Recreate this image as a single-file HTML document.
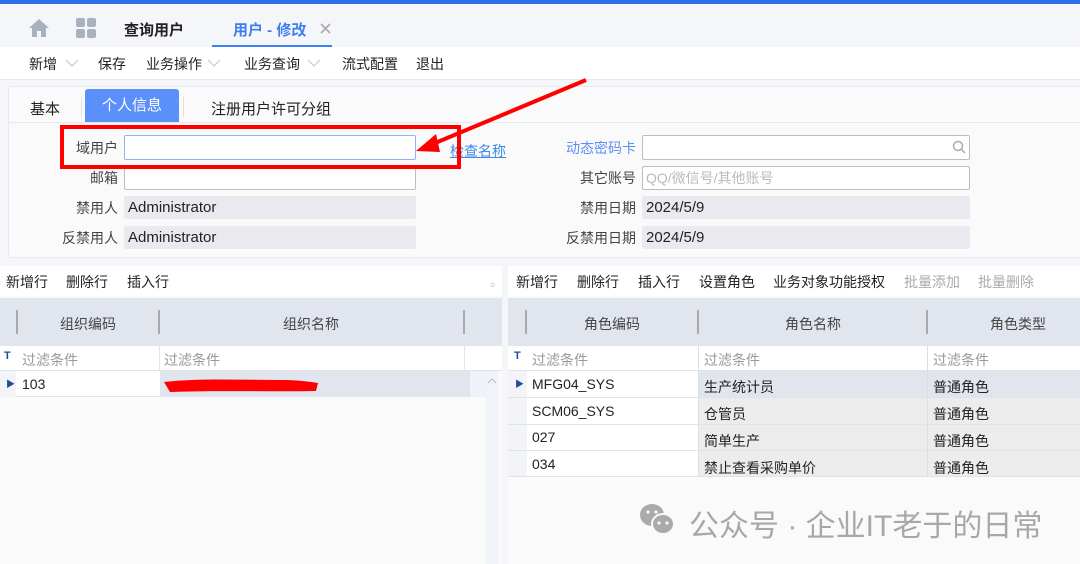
<!DOCTYPE html>
<html><head><meta charset="utf-8"><style>
*{margin:0;padding:0;box-sizing:border-box}
body{width:1080px;height:564px;overflow:hidden;background:#f5f6fa;font-family:"Liberation Sans","Noto Sans CJK SC",sans-serif;font-size:14px;color:#222;position:relative}
.a{position:absolute;white-space:nowrap}
.lbl{position:absolute;text-align:right;color:#444;font-size:14px}
.inp{position:absolute;background:#fff;border:1px solid #b8bdcc;border-radius:2px}
.ro{position:absolute;background:#e8eaef;border-radius:2px;font-size:15px;padding-left:4px;line-height:24px;color:#222}
.g{position:absolute;color:#999;font-size:14px}
</style></head><body>
<div class="a" style="left:0;top:0;width:1080px;height:4px;background:#2f6fe6"></div>
<svg class="a" style="left:28px;top:18px" width="22" height="20" viewBox="0 0 22 20"><path d="M11 1 L1 10 H4 V19 H9 V13 H13 V19 H18 V10 H21 Z" fill="#a9b0c0"/></svg>
<svg class="a" style="left:76px;top:18px" width="20" height="20"><rect x="0" y="0" width="9" height="9" rx="2" fill="#a9b0c0"/><rect x="11" y="0" width="9" height="9" rx="2" fill="#a9b0c0"/><rect x="0" y="11" width="9" height="9" rx="2" fill="#a9b0c0"/><rect x="11" y="11" width="9" height="9" rx="2" fill="#a9b0c0"/></svg>
<div class="a" style="left:124px;top:19px;font-size:15px;font-weight:bold;color:#222">查询用户</div>
<div class="a" style="left:233px;top:19px;font-size:15px;font-weight:bold;color:#3d7ff0">用户 - 修改</div>
<svg class="a" style="left:320px;top:23px" width="11" height="11"><path d="M1 1L10 10M10 1L1 10" stroke="#aaa" stroke-width="1.6"/></svg>
<div class="a" style="left:212px;top:45px;width:120px;height:2px;background:#3d7ff0"></div>
<div class="a" style="left:0;top:47px;width:1080px;height:33px;background:#fff;border-bottom:1px solid #e6e8ee"></div>
<div class="a" style="left:29px;top:54px">新增</div>
<div class="a" style="left:98px;top:54px">保存</div>
<div class="a" style="left:146px;top:54px">业务操作</div>
<div class="a" style="left:244px;top:54px">业务查询</div>
<svg class="a" style="left:0;top:0" width="340" height="80"><g fill="none" stroke="#c4c8d2" stroke-width="1.2"><path d="M66 60 L72 66 L78 60"/><path d="M208 60 L214 66 L220 60"/><path d="M308 60 L314 66 L320 60"/></g></svg>
<div class="a" style="left:342px;top:54px">流式配置</div>
<div class="a" style="left:416px;top:54px">退出</div>
<div class="a" style="left:8px;top:86px;width:1080px;height:172px;background:#fafafa;border:1px solid #e6e8ee;border-radius:3px"></div>
<div class="a" style="left:9px;top:122px;width:1071px;height:1px;background:#e6e8ee"></div>
<div class="a" style="left:30px;top:98px;font-size:15px">基本</div>
<div class="a" style="left:81px;top:97px;width:1px;height:20px;background:#e0e0e0"></div>
<div class="a" style="left:85px;top:89px;width:94px;height:33px;background:#5b8ff9;border-radius:3px 3px 0 0;color:#fff;font-size:15px;text-align:center;line-height:33px">个人信息</div>
<div class="a" style="left:183px;top:97px;width:1px;height:20px;background:#e0e0e0"></div>
<div class="a" style="left:211px;top:98px;font-size:15px">注册用户许可分组</div>
<div class="lbl" style="left:40px;width:78px;top:138px">域用户</div>
<div class="inp" style="left:124px;top:135px;width:292px;height:25px;border-color:#8fb3f5"></div>
<div class="a" style="left:450px;top:141px;color:#3d8be8;text-decoration:underline">检查名称</div>
<div class="lbl" style="left:40px;width:78px;top:168px">邮箱</div>
<div class="inp" style="left:124px;top:166px;width:292px;height:24px"></div>
<div class="lbl" style="left:40px;width:78px;top:198px">禁用人</div>
<div class="ro" style="left:124px;top:196px;width:292px;height:23px">Administrator</div>
<div class="lbl" style="left:40px;width:78px;top:228px">反禁用人</div>
<div class="ro" style="left:124px;top:226px;width:292px;height:23px">Administrator</div>
<div class="lbl" style="left:536px;width:100px;top:138px;color:#5b8ff9">动态密码卡</div>
<div class="inp" style="left:642px;top:135px;width:328px;height:25px"></div>
<svg class="a" style="left:952px;top:140px" width="14" height="14"><circle cx="6" cy="6" r="4.5" fill="none" stroke="#aaa" stroke-width="1.5"/><path d="M9.5 9.5 L13 13" stroke="#aaa" stroke-width="1.5"/></svg>
<div class="lbl" style="left:536px;width:100px;top:168px">其它账号</div>
<div class="inp" style="left:642px;top:166px;width:328px;height:24px;color:#bbb;padding-left:3px;line-height:22px">QQ/微信号/其他账号</div>
<div class="lbl" style="left:536px;width:100px;top:198px">禁用日期</div>
<div class="ro" style="left:642px;top:196px;width:328px;height:23px">2024/5/9</div>
<div class="lbl" style="left:536px;width:100px;top:228px">反禁用日期</div>
<div class="ro" style="left:642px;top:226px;width:328px;height:23px">2024/5/9</div>
<div class="a" style="left:60px;top:125px;width:401px;height:44px;border:4px solid #f00"></div>
<svg class="a" style="left:0;top:0" width="1080" height="564"><path d="M586 80 L428 146" stroke="#f00" stroke-width="4"/><path d="M416 151 L436 134 L440 152 Z" fill="#f00"/></svg>
<div class="a" style="left:0;top:266px;width:502px;height:298px;background:#fafafa"></div>
<div class="a" style="left:0;top:266px;width:502px;height:30px;background:#fff"></div>
<div class="a" style="left:6px;top:272px">新增行</div><div class="a" style="left:66px;top:272px">删除行</div><div class="a" style="left:127px;top:272px">插入行</div>
<div class="a" style="left:490px;top:280px;color:#ccc;font-size:9px">≡</div>
<div class="a" style="left:0;top:298px;width:502px;height:48px;background:#e1e5ee"></div>
<div class="a" style="left:16px;top:310px;width:2px;height:24px;background:#aaa"></div>
<div class="a" style="left:158px;top:310px;width:2px;height:24px;background:#aaa"></div>
<div class="a" style="left:463px;top:310px;width:2px;height:24px;background:#aaa"></div>
<div class="a" style="left:60px;top:314px;color:#444">组织编码</div>
<div class="a" style="left:283px;top:314px;color:#444">组织名称</div>
<div class="a" style="left:0;top:346px;width:502px;height:25px;background:#fff;border-bottom:1px solid #e0e3ea"></div>
<div class="a" style="left:4px;top:350px;color:#1e4c9a;font-size:11px;font-weight:bold">T</div>
<div class="g" style="left:22px;top:350px">过滤条件</div><div class="g" style="left:164px;top:350px">过滤条件</div>
<div class="a" style="left:159px;top:346px;width:1px;height:51px;background:#e0e3ea"></div>
<div class="a" style="left:464px;top:346px;width:1px;height:25px;background:#e0e3ea"></div>
<div class="a" style="left:0;top:371px;width:486px;height:26px;background:#fff;border-bottom:1px solid #e0e3ea"></div>
<div class="a" style="left:160px;top:371px;width:310px;height:26px;background:#e1e5ee"></div>
<div class="a" style="left:470px;top:371px;width:16px;height:26px;background:#eef2fa"></div>
<div class="a" style="left:0;top:371px;width:16px;height:26px;background:#f3f4f7"></div>
<div class="a" style="left:6px;top:377px;color:#1e4c9a;font-size:9px">▶</div>
<div class="a" style="left:22px;top:376px">103</div>
<svg class="a" style="left:160px;top:374px" width="165" height="22"><path d="M4 8 C40 4 80 6 120 6 C140 6 150 8 158 9 L156 17 C110 18 60 16 10 18 Z" fill="#f00"/></svg>
<div class="a" style="left:486px;top:371px;width:12px;height:193px;background:#f0f3f9"></div>
<svg class="a" style="left:487px;top:378px" width="10" height="6"><path d="M1 5 L5 1 L9 5" fill="none" stroke="#bbb"/></svg>
<div class="a" style="left:508px;top:266px;width:572px;height:298px;background:#fafafa"></div>
<div class="a" style="left:508px;top:266px;width:572px;height:30px;background:#fff"></div>
<div class="a" style="left:516px;top:272px">新增行</div><div class="a" style="left:577px;top:272px">删除行</div><div class="a" style="left:638px;top:272px">插入行</div><div class="a" style="left:699px;top:272px">设置角色</div><div class="a" style="left:773px;top:272px">业务对象功能授权</div><div class="a" style="left:904px;top:272px;color:#aaa">批量添加</div><div class="a" style="left:978px;top:272px;color:#aaa">批量删除</div>
<div class="a" style="left:508px;top:298px;width:572px;height:48px;background:#e1e5ee"></div>
<div class="a" style="left:525px;top:310px;width:2px;height:24px;background:#aaa"></div>
<div class="a" style="left:697px;top:310px;width:2px;height:24px;background:#aaa"></div>
<div class="a" style="left:926px;top:310px;width:2px;height:24px;background:#aaa"></div>
<div class="a" style="left:584px;top:314px;color:#444">角色编码</div>
<div class="a" style="left:785px;top:314px;color:#444">角色名称</div>
<div class="a" style="left:990px;top:314px;color:#444">角色类型</div>
<div class="a" style="left:508px;top:346px;width:572px;height:25px;background:#fff;border-bottom:1px solid #e0e3ea"></div>
<div class="a" style="left:514px;top:350px;color:#1e4c9a;font-size:11px;font-weight:bold">T</div>
<div class="g" style="left:532px;top:350px">过滤条件</div><div class="g" style="left:704px;top:350px">过滤条件</div><div class="g" style="left:933px;top:350px">过滤条件</div>
<div class="a" style="left:508px;top:371px;width:572px;height:106px;background:#fff"></div>
<div class="a" style="left:699px;top:371px;width:381px;height:106px;background:#ececec"></div>
<div class="a" style="left:699px;top:371px;width:381px;height:26px;background:#e1e5ee"></div>
<div class="a" style="left:508px;top:371px;width:19px;height:106px;background:#f3f4f7"></div>
<div class="a" style="left:698px;top:346px;width:1px;height:131px;background:#dde"></div>
<div class="a" style="left:927px;top:346px;width:1px;height:131px;background:#dde"></div>
<div class="a" style="left:508px;top:397px;width:572px;height:1px;background:#e0e3ea"></div>
<div class="a" style="left:508px;top:424px;width:572px;height:1px;background:#e0e3ea"></div>
<div class="a" style="left:508px;top:450px;width:572px;height:1px;background:#e0e3ea"></div>
<div class="a" style="left:508px;top:476px;width:572px;height:1px;background:#e0e3ea"></div>
<div class="a" style="left:515px;top:377px;color:#1e4c9a;font-size:9px">▶</div>
<div class="a" style="left:532px;top:376px">MFG04_SYS</div><div class="a" style="left:704px;top:377px">生产统计员</div><div class="a" style="left:933px;top:377px">普通角色</div>
<div class="a" style="left:532px;top:403px">SCM06_SYS</div><div class="a" style="left:704px;top:404px">仓管员</div><div class="a" style="left:933px;top:404px">普通角色</div>
<div class="a" style="left:532px;top:429px">027</div><div class="a" style="left:704px;top:431px">简单生产</div><div class="a" style="left:933px;top:431px">普通角色</div>
<div class="a" style="left:532px;top:456px">034</div><div class="a" style="left:704px;top:458px">禁止查看采购单价</div><div class="a" style="left:933px;top:458px">普通角色</div>
<svg class="a" style="left:638px;top:502px" width="38" height="36"><ellipse cx="14" cy="13" rx="12" ry="11" fill="#aaa"/><ellipse cx="25" cy="22" rx="11" ry="10" fill="#aaa" stroke="#fafafa" stroke-width="2"/><circle cx="21" cy="21" r="1.6" fill="#fafafa"/><circle cx="29" cy="21" r="1.6" fill="#fafafa"/><circle cx="10" cy="10" r="1.6" fill="#fafafa"/><circle cx="18" cy="10" r="1.6" fill="#fafafa"/></svg>
<div class="a" style="left:689px;top:501px;font-size:30px;color:#a8a8a8">公众号 · 企业IT老于的日常</div>
</body></html>
